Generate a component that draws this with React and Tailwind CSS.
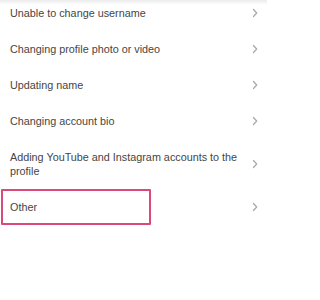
const items = [
  "Unable to change username",
  "Changing profile photo or video",
  "Updating name",
  "Changing account bio",
  "Adding YouTube and Instagram accounts to the profile",
  "Other",
];

function Chevron() {
  return (
    <svg width="6" height="10" viewBox="0 0 6 10" fill="none" className="shrink-0">
      <path d="M1.5 1.5l3.2 3.5-3.2 3.5" stroke="#a8a8a8" strokeWidth="1.2" strokeLinecap="round" strokeLinejoin="round" />
    </svg>
  );
}

export default function App() {
  return (
    <div className="relative w-[267px] h-[300px] bg-white overflow-hidden" style={{ fontFamily: '"Liberation Sans", Arial, sans-serif' }}>
      {/* soft shadow at the top edge */}
      <div className="absolute top-0 left-0 right-0 h-[5px] bg-gradient-to-b from-[#ececec] to-white" />

      <ul className="relative -mt-[5px]">
        {items.map((label) => (
          <li key={label} className="relative flex items-center justify-between pl-[10px] pr-[9px] py-[11px]">
            <span className="w-[232px] text-[10.8px] leading-[14px] text-[#454545]">{label}</span>
            <Chevron />
            {label === "Other" && (
              <div className="absolute left-[1px] top-0 bottom-0 w-[150px] border-2 border-[#d9497c] rounded-[1px]" />
            )}
          </li>
        ))}
      </ul>
    </div>
  );
}
